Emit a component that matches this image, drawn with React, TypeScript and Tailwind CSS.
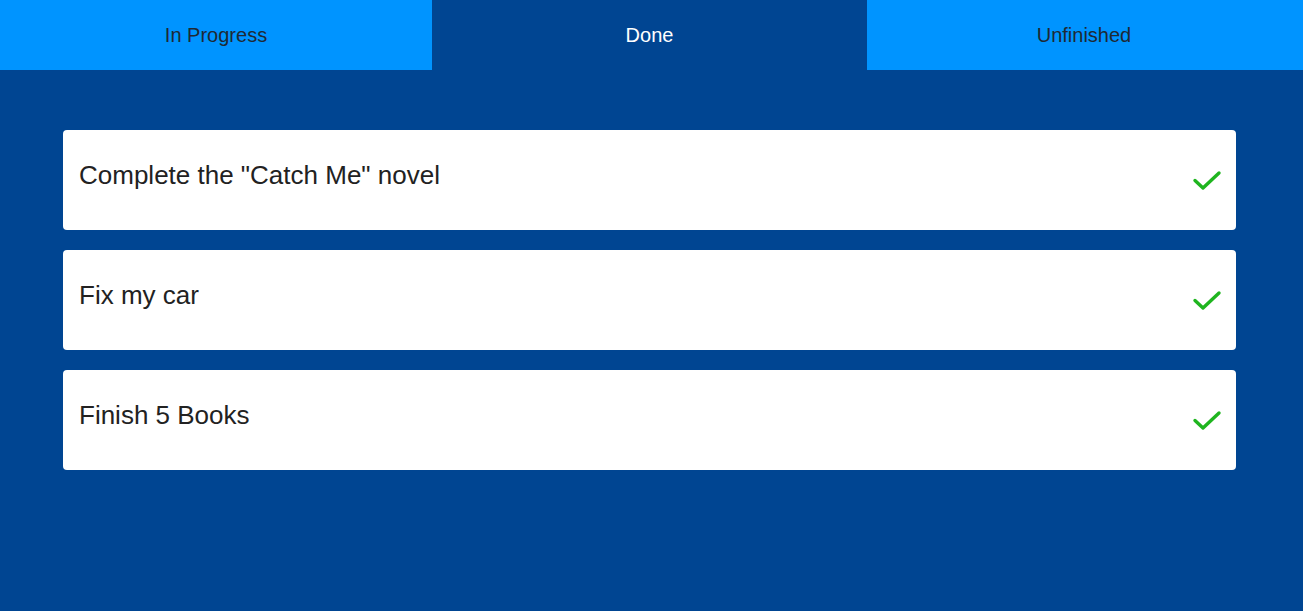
import React from "react";

const tasks = ['Complete the "Catch Me" novel', "Fix my car", "Finish 5 Books"];

function Check() {
  return (
    <svg width="30" height="24" viewBox="0 0 30 24" fill="none">
      <path d="M3 12.5 L11 20 L27 5" stroke="#1fb51f" strokeWidth="3.4" strokeLinecap="round" strokeLinejoin="round" />
    </svg>
  );
}

export default function App() {
  return (
    <div className="w-[1303px] h-[611px] bg-[#004592] flex flex-col" style={{ fontFamily: '"Liberation Sans", Arial, sans-serif' }}>
      <div className="flex h-[70px]">
        <div className="w-[432px] bg-[#0094ff] flex items-center justify-center text-[20px] text-[#1f2933]">In Progress</div>
        <div className="w-[435px] bg-[#004592] flex items-center justify-center text-[20px] text-white">Done</div>
        <div className="flex-1 bg-[#0094ff] flex items-center justify-center text-[20px] text-[#1f2933] pr-[2px]">Unfinished</div>
      </div>
      <div className="flex flex-col gap-5 pt-[60px] pl-[63px]">
        {tasks.map((t) => (
          <div key={t} className="w-[1173px] h-[100px] bg-white rounded-[4px] flex items-center justify-between pl-4 pr-[14px]">
            <span className="text-[26px] leading-[39px] text-[#222] -mt-[9px]">{t}</span>
            <Check />
          </div>
        ))}
      </div>
    </div>
  );
}
